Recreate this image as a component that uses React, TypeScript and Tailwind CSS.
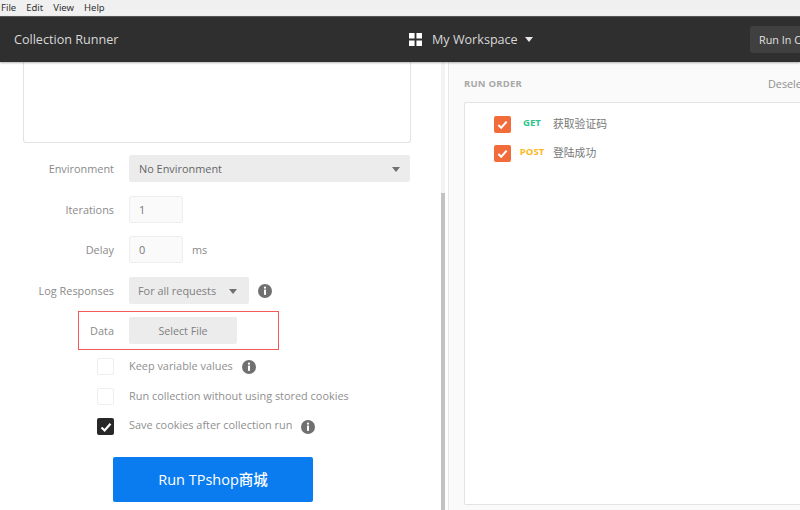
import React from "react";

function Info() {
  return (
    <svg width="14" height="14" viewBox="0 0 15 15" className="shrink-0">
      <circle cx="7.5" cy="7.5" r="7.5" fill="#707070" />
      <circle cx="7.5" cy="4" r="1.2" fill="#fff" />
      <rect x="6.4" y="6" width="2.2" height="5.6" fill="#fff" />
    </svg>
  );
}

function Caret({ color = "#707070" }: { color?: string }) {
  return (
    <svg width="8" height="5" viewBox="0 0 8 5" className="shrink-0">
      <path d="M0 0h8L4 5z" fill={color} />
    </svg>
  );
}

function Check({ size = 12 }: { size?: number }) {
  return (
    <svg width={size} height={size} viewBox="0 0 12 12">
      <path d="M1.5 6.5L4.6 9.5L10.5 2.8" fill="none" stroke="#fff" strokeWidth="2.2" />
    </svg>
  );
}

function Row({ label, children, className }: { label: string; children: React.ReactNode; className: string }) {
  return (
    <div className={"flex items-center " + className}>
      <div className="w-[114px] shrink-0 pt-[2px] text-right text-[10.9px] text-[#8a8a8a]">{label}</div>
      <div className="ml-[15px] flex items-center">{children}</div>
    </div>
  );
}

function CheckRow({ label, checked, info, className }: { label: string; checked?: boolean; info?: boolean; className: string }) {
  return (
    <div className={"ml-[97px] flex h-[17px] items-center " + className}>
      {checked ? (
        <div className="flex h-[17px] w-[17px] items-center justify-center rounded-[2px] bg-[#282828]">
          <Check />
        </div>
      ) : (
        <div className="h-[17px] w-[17px] rounded-[2px] border border-[#eeeeee] bg-white" />
      )}
      <span className={"ml-[15px] text-[10.9px] text-[#8f8f8f] " + (checked ? "pb-[2px]" : "")}>{label}</span>
      {info && <span className="ml-[9px] flex"><Info /></span>}
    </div>
  );
}

function Req({ method, color, name, className }: { method: string; color: string; name: string; className: string }) {
  return (
    <div className={"flex h-[17px] items-center " + className}>
      <div className="flex h-[17px] w-[17px] items-center justify-center rounded-[2px] bg-[#f26b3a]">
        <Check size={11} />
      </div>
      <div className="w-[42px] pb-[3px] text-center text-[9.6px] font-bold" style={{ color }}>{method}</div>
      <div className="pb-[1px] text-[10.8px] text-[#777777]">{name}</div>
    </div>
  );
}

export default function App() {
  return (
    <div
      className="flex h-[510px] w-[800px] flex-col overflow-hidden bg-white"
      style={{ fontFamily: '"Open Sans", "Noto Sans CJK SC", sans-serif' }}
    >
      <div className="flex h-[16px] shrink-0 items-center gap-[10px] bg-[#f0f0f0] pl-px text-[9.5px] text-[#333333]" style={{ fontFamily: '"Noto Sans", sans-serif' }}>
        <span>File</span>
        <span>Edit</span>
        <span>View</span>
        <span>Help</span>
      </div>
      <div className="relative z-10 flex h-[46px] shrink-0 items-center whitespace-nowrap border-t border-[#555555] bg-[#2f2f2f] shadow-[0_1px_2px_rgba(0,0,0,0.3)]">
        <div className="w-[409px] shrink-0 pl-[14px] pt-[2px] text-[12.6px] text-[#d8d8d8]">Collection Runner</div>
        <svg width="13" height="13" viewBox="0 0 14 14" className="shrink-0">
          <path d="M0 0h6v6H0zM8 0h6v6H8zM0 8h6v6H0zM8 8h6v6H8z" fill="#ffffff" />
        </svg>
        <div className="ml-[10px] w-[86px] shrink-0 pt-[2px] text-[12.6px] text-[#d8d8d8]">My Workspace</div>
        <div className="ml-[7px] shrink-0"><Caret color="#e8e8e8" /></div>
        <div className="ml-[217px] flex h-[27px] w-[60px] shrink-0 items-center overflow-hidden rounded-l-[3px] bg-[#404040] pl-[9px] pt-[2px] text-[10.8px] text-[#e0e0e0]">Run In Chrome</div>
      </div>

      <div className="flex min-h-0 flex-1">
        <div className="w-[441px] shrink-0">
          <div className="ml-[23px] h-[81px] w-[388px] rounded-b-[3px] border border-t-0 border-[#e3e3e3] bg-white" />
          <Row label="Environment" className="mt-[12px] h-[27px]">
            <div className="flex h-[27px] w-[281px] items-center justify-between rounded-[2px] bg-[#ececec] pl-[10px] pr-[10px] pt-[2px] text-[10.9px] text-[#666666]">
              No Environment
              <Caret />
            </div>
          </Row>
          <Row label="Iterations" className="mt-[14px] h-[27px]">
            <div className="flex h-[27px] w-[54px] items-center rounded-[2px] border border-[#eeeeee] bg-[#fafafa] pl-[9px] pt-[2px] text-[10.9px] text-[#777777]">1</div>
          </Row>
          <Row label="Delay" className="mt-[13px] h-[27px]">
            <div className="flex h-[27px] w-[54px] items-center rounded-[2px] border border-[#eeeeee] bg-[#fafafa] pl-[9px] pt-[2px] text-[10.9px] text-[#777777]">0</div>
            <span className="ml-[9px] pt-[2px] text-[10.9px] text-[#8a8a8a]">ms</span>
          </Row>
          <Row label="Log Responses" className="mt-[14px] h-[27px]">
            <div className="flex h-[27px] w-[120px] items-center justify-between rounded-[2px] bg-[#ececec] pl-[9px] pr-[12px] pt-[2px] text-[10.9px] text-[#808080]">
              For all requests
              <Caret />
            </div>
            <span className="ml-[9px] flex"><Info /></span>
          </Row>
          <div className="relative">
            <Row label="Data" className="mt-[13px] h-[27px]">
              <div className="flex h-[27px] w-[108px] items-center justify-center rounded-[2px] bg-[#ececec] pt-[2px] text-[10.7px] text-[#808080]">Select File</div>
            </Row>
            <div className="absolute left-[78px] top-[-6px] h-[39px] w-[201px] border border-[#f05a5a]" />
          </div>
          <CheckRow label="Keep variable values" info className="mt-[14px]" />
          <CheckRow label="Run collection without using stored cookies" className="mt-[13px]" />
          <CheckRow label="Save cookies after collection run" checked info className="mt-[13px]" />
          <div className="ml-[113px] mt-[22px] flex h-[45px] w-[200px] items-center justify-center rounded-[2px] bg-[#0a7cf0] text-[14.5px] font-medium text-white">
            Run TPshop商城
          </div>
        </div>

        <div className="relative w-[8px] shrink-0 bg-white">
          <div className="absolute left-0 top-0 h-full w-[4px] bg-[#f3f3f3]" />
          <div className="absolute left-0 top-[131px] h-[317px] w-[4px] bg-[#c2c2c2]" />
          <div className="absolute right-0 top-0 h-full w-px bg-[#e8e8e8]" />
        </div>

        <div className="flex min-w-0 flex-1 flex-col bg-[#fafafa] pl-[15px]">
          <div className="flex h-[40px] shrink-0 items-center justify-between pt-[4px]">
            <span className="text-[9.5px] font-bold tracking-[0.2px] text-[#a8a8a8]">RUN ORDER</span>
            <span className="w-[32px] overflow-hidden whitespace-nowrap text-[10.8px] text-[#8f8f8f]">Deselect All</span>
          </div>
          <div className="mb-[5px] flex-1 rounded-l-[2px] border border-r-0 border-[#e3e3e3] bg-white pl-[29px] pt-[13px]">
            <Req method="GET" color="#2fc48d" name="获取验证码" className="" />
            <Req method="POST" color="#fbb81f" name="登陆成功" className="mt-[12px]" />
          </div>
        </div>
      </div>
    </div>
  );
}
